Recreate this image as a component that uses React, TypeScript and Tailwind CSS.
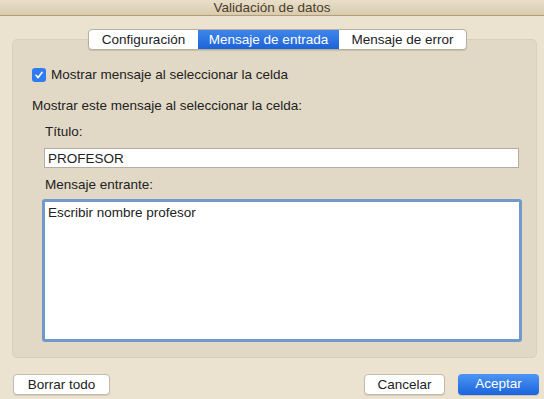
import React, { useState } from 'react';

const tabs = ['Configuración', 'Mensaje de entrada', 'Mensaje de error'];
const tabWidths = ['w-[109px]', 'w-[141px]', 'w-[127px]'];

const App: React.FC = () => {
  const [active, setActive] = useState(1);
  const [show, setShow] = useState(true);
  const [title, setTitle] = useState('PROFESOR');
  const [message, setMessage] = useState('Escribir nombre profesor');

  return (
    <div className="w-[544px] h-[399px] bg-[#ebe3d0] text-[13.5px] text-[#222] font-['Liberation_Sans',Arial,sans-serif] flex flex-col overflow-hidden">
      <div className="h-[16px] shrink-0 bg-gradient-to-b from-[#e9dfc9] to-[#d8cbaf] border-b border-[#b49d76] text-center leading-[15px] text-[#4a3d2c]">
        Validación de datos
      </div>

      <div className="mt-[23px] ml-[12px] mr-[7px] h-[319px] bg-[#e1d9c6] rounded-[5px] border border-[#d9d0bc] flex flex-col">
        <div className="-mt-[11px] ml-[75px] flex h-[21px]">
          <div className="flex rounded-[4px] border border-[#b7ae9f] bg-white shadow-[0_1px_1px_rgba(0,0,0,0.12)] overflow-hidden">
            {tabs.map((t, i) => (
              <button
                key={t}
                onClick={() => setActive(i)}
                className={`${tabWidths[i]} h-[19px] leading-[19px] text-center ${
                  active === i
                    ? 'bg-gradient-to-b from-[#3f86ea] to-[#1d63d8] text-white'
                    : 'text-[#222]'
                }`}
              >
                {t}
              </button>
            ))}
          </div>
        </div>

        <div className="flex flex-col pl-[19px] pr-[14px] pt-[17px]">
          <label className="flex items-center h-[16px] gap-[5px]">
            <span
              onClick={() => setShow(!show)}
              className={`w-[14px] h-[14px] rounded-[3px] flex items-center justify-center ${
                show ? 'bg-[#2f7cf0]' : 'bg-white border border-[#b0a99c]'
              }`}
            >
              {show && (
                <svg width="10" height="10" viewBox="0 0 10 10">
                  <path d="M2 5.3 L4.1 7.6 L8 2.4" fill="none" stroke="white" strokeWidth="1.6" strokeLinecap="round" strokeLinejoin="round" />
                </svg>
              )}
            </span>
            <span className="leading-[16px]">Mostrar mensaje al seleccionar la celda</span>
          </label>

          <div className="mt-[15px] leading-[16px]">Mostrar este mensaje al seleccionar la celda:</div>

          <div className="mt-[10px] ml-[13px] leading-[16px]">Título:</div>
          <input
            value={title}
            onChange={(e) => setTitle(e.target.value)}
            className="mt-[8px] ml-[12px] w-[475px] h-[20px] bg-white border border-[#b3ada2] px-[3px] outline-none leading-[18px]"
          />

          <div className="mt-[9px] ml-[13px] leading-[16px]">Mensaje entrante:</div>
          <textarea
            value={message}
            onChange={(e) => setMessage(e.target.value)}
            className="mt-[6px] ml-[10px] w-[480px] h-[143px] bg-white border-[3px] border-[#7199cc] rounded-[3px] px-[3px] pt-[3px] outline-none resize-none leading-[16px]"
          />
        </div>
      </div>

      <div className="mt-[16px] flex items-center pl-[13px] pr-[5px]">
        <button className="w-[97px] h-[21px] bg-white border border-[#c3bbac] rounded-[4px] shadow-[0_1px_1px_rgba(0,0,0,0.1)]">
          Borrar todo
        </button>
        <div className="flex-1" />
        <button className="w-[81px] h-[21px] bg-white border border-[#c3bbac] rounded-[4px] shadow-[0_1px_1px_rgba(0,0,0,0.1)]">
          Cancelar
        </button>
        <button className="ml-[13px] w-[81px] h-[21px] rounded-[4px] bg-gradient-to-b from-[#4d95f3] to-[#1864dc] text-white shadow-[0_1px_1px_rgba(0,0,0,0.15)]">
          Aceptar
        </button>
      </div>
    </div>
  );
};

export default App;
